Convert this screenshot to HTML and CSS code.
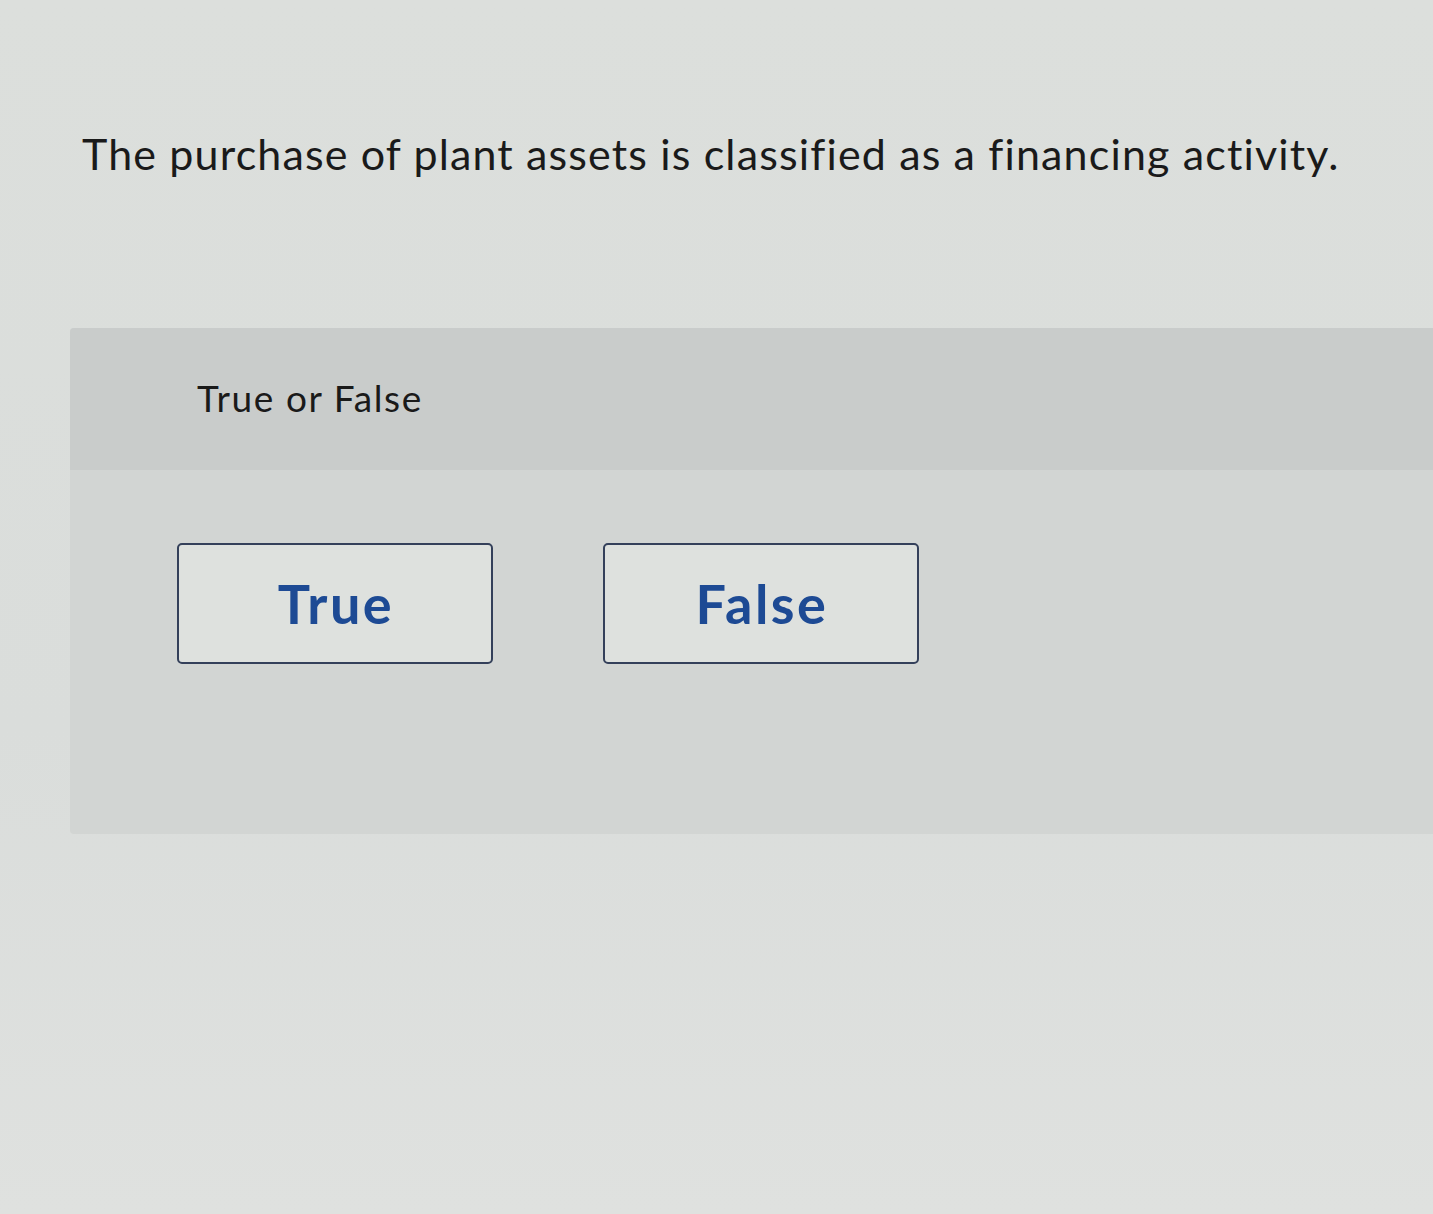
FILE: index.html
```html
<!DOCTYPE html>
<html>
<head>
<meta charset="utf-8">
<link rel="stylesheet" href="styles.css">
</head>
<body>
<main class="page">
  <h1 class="question">The purchase of plant assets is classified as a financing activity.</h1>
  <section class="panel">
    <div class="panel-head">True or False</div>
    <div class="panel-body">
      <button class="choice">True</button>
      <button class="choice">False</button>
    </div>
  </section>
</main>
</body>
</html>
```

FILE: styles.css
```css
html, body {
  margin: 0;
  padding: 0;
}
body {
  width: 1433px;
  height: 1214px;
  overflow: hidden;
  background: linear-gradient(180deg, #dcdfdc 0%, #dadddb 60%, #dfe1df 100%);
  font-family: Lato, "Noto Sans", sans-serif;
}
.page {
  padding-top: 126px;
}
.question {
  margin: 0 0 0 82px;
  font-weight: 400;
  font-size: 43px;
  line-height: 56px;
  color: #1a1a1a;
  letter-spacing: 1.15px;
}
.panel {
  margin: 146px 0 0 70px;
  background: #d2d5d3;
  border-top-left-radius: 4px;
  border-bottom-left-radius: 4px;
}
.panel-head {
  height: 142px;
  box-sizing: border-box;
  padding: 46px 0 0 127px;
  background: #c9cccb;
  font-size: 37px;
  line-height: 48px;
  color: #1a1a1a;
  letter-spacing: 1.6px;
  border-top-left-radius: 4px;
}
.panel-body {
  height: 364px;
  box-sizing: border-box;
  padding: 73px 0 0 107px;
  display: flex;
  gap: 110px;
  align-items: flex-start;
}
.choice {
  width: 316px;
  height: 121px;
  box-sizing: border-box;
  border: 2px solid #34405a;
  border-radius: 5px;
  background: #dee1de;
  color: #1d4a94;
  font-family: Lato, "Noto Sans", sans-serif;
  font-weight: 700;
  font-size: 54px;
  letter-spacing: 2.5px;
  padding: 0 0 0 2px;
  cursor: pointer;
}
```
